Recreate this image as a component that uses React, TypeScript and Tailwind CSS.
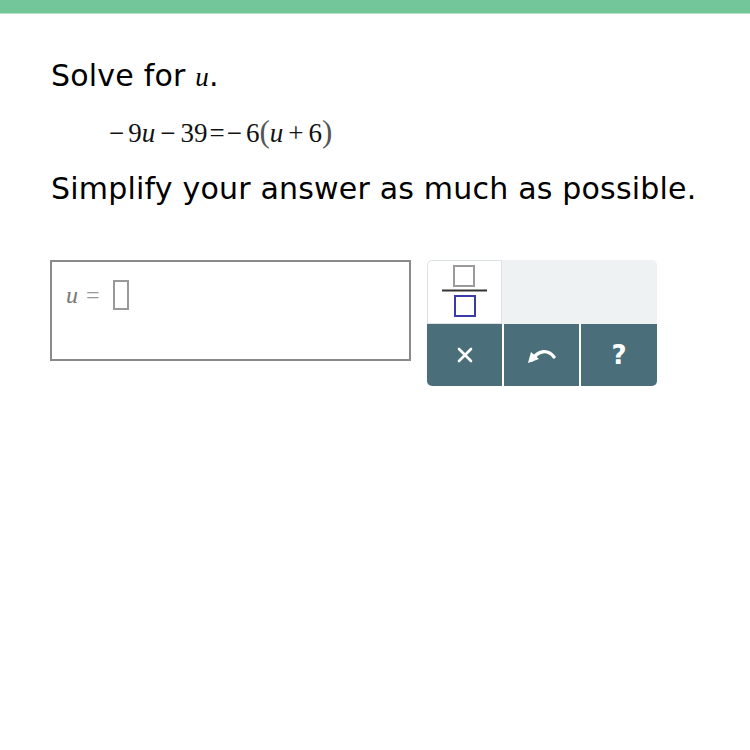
import React from 'react';

// --- Small math helpers ---
const Op = ({ children, tight }: { children: React.ReactNode; tight?: boolean }) => (
    <span className={tight ? 'mx-[2px]' : 'mx-[5px]'}>{children}</span>
);

const Var = ({ children }: { children: React.ReactNode }) => (
    <span className="italic">{children}</span>
);

// --- Fraction template icon ---
const FractionIcon = () => (
    <svg width="48" height="54" viewBox="0 0 48 54">
        <rect x="13" y="1" width="20" height="20" fill="none" stroke="#9a9a9a" strokeWidth="2" />
        <line x1="1" y1="25.5" x2="46" y2="25.5" stroke="#333" strokeWidth="2" />
        <rect x="14" y="31" width="20" height="20" fill="none" stroke="#3a3aa8" strokeWidth="2" />
    </svg>
);

const UndoIcon = () => (
    <svg width="30" height="18" viewBox="0 0 30 18">
        <path d="M5 14 C11 4, 21 3, 27 11" fill="none" stroke="#fff" strokeWidth="3.4" strokeLinecap="round" />
        <path d="M1 17 L4 6 L12 13 Z" fill="#fff" />
    </svg>
);

export default function App() {
    return (
        <div className="w-[750px] h-[750px] bg-white font-['DejaVu_Sans',sans-serif] text-black">
            <div className="h-[14px] bg-[#72c69a] border-b border-[#b6e2c8]" />

            <div className="pl-[51px] pt-[44px]">
                <p className="text-[30px] leading-[36px] tracking-[0.2px]">
                    Solve for <span className="font-['Liberation_Serif',serif] italic text-[27px]">u</span>.
                </p>

                <div className="pl-[58px] mt-[22px] font-['Liberation_Serif',serif] text-[27px] leading-[30px] text-[#111] flex items-baseline">
                    <span className="mr-[4px]">−</span>9<Var>u</Var>
                    <Op>−</Op>39<Op tight>=</Op>
                    <span className="mr-[4px]">−</span>6
                    <span className="text-[31px] leading-[30px] text-[#555]">(</span>
                    <Var>u</Var>
                    <Op>+</Op>6
                    <span className="text-[31px] leading-[30px] text-[#555]">)</span>
                </div>

                <p className="mt-[23px] text-[30px] leading-[36px] tracking-[0.2px]">Simplify your answer as much as possible.</p>
            </div>

            <div className="flex items-start pl-[50px] mt-[53px] gap-[16px]">
                <div className="w-[361px] h-[101px] border-2 border-[#8a8a8a] flex items-start pt-[15px] pl-[14px]">
                    <div className="flex items-center font-['Liberation_Serif',serif] text-[24px] text-[#777]">
                        <span className="italic">u</span>
                        <span className="ml-[8px] text-[#999]">=</span>
                        <span className="ml-[13px] w-[16px] h-[30px] border-2 border-[#999]" />
                    </div>
                </div>

                <div className="w-[230px] h-[126px] rounded-[5px] overflow-hidden flex flex-col bg-[#eff2f3]">
                    <div className="h-[64px] flex">
                        <div className="w-[75px] h-[64px] bg-white border border-[#dde3e5] rounded-tl-[5px] flex items-center justify-center">
                            <FractionIcon />
                        </div>
                    </div>
                    <div className="flex-1 flex gap-[2px] bg-white">
                        <button className="w-[75px] bg-[#4a6f7b] flex items-center justify-center text-white">
                            <svg width="16" height="16" viewBox="0 0 16 16">
                                <path d="M2 2 L14 14 M14 2 L2 14" stroke="#fff" strokeWidth="2.6" strokeLinecap="round" />
                            </svg>
                        </button>
                        <button className="w-[75px] bg-[#4a6f7b] flex items-center justify-center">
                            <UndoIcon />
                        </button>
                        <button className="flex-1 bg-[#4a6f7b] flex items-center justify-center text-white text-[26px] font-bold font-['DejaVu_Sans',sans-serif]">
                            ?
                        </button>
                    </div>
                </div>
            </div>
        </div>
    );
}
